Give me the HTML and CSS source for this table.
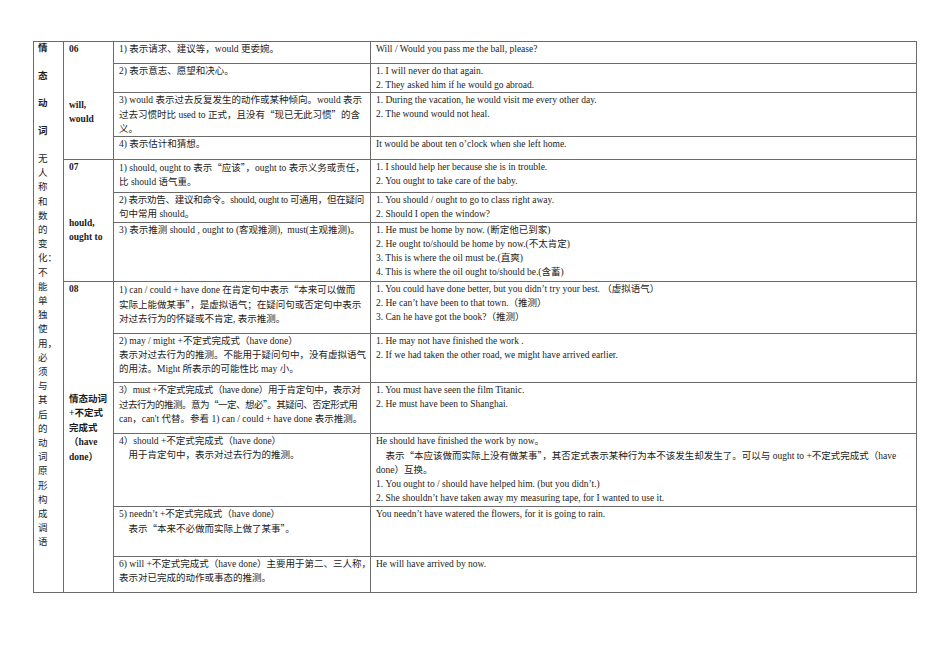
FILE: index.html
```html
<!DOCTYPE html>
<html lang="zh-CN">
<head>
<meta charset="utf-8">
<title>情态动词</title>
<link rel="stylesheet" href="styles.css">
</head>
<body>
<div class="sheet">
<table class="grammar">
<colgroup><col class="w1"><col class="w2"><col class="w3"><col class="w4"></colgroup>
<tbody>
<tr class="r1">
<td class="c1" rowspan="13">
<div class="c1-top"><b>情</b><br><br><b>态</b><br><br><b>动</b><br><br><b>词</b><br><br></div>
<div class="c1-body">无<br>人<br>称<br>和<br>数<br>的<br>变<br>化：<br>不<br>能<br>单<br>独<br>使<br>用，<br>必<br>须<br>与<br>其<br>后<br>的<br>动<br>词<br>原<br>形<br>构<br>成<br>调<br>语</div>
</td>
<td class="c2" rowspan="4"><div class="lbl">06</div><div class="sp-a"></div><div class="lbl">will,</div><div class="lbl">would</div></td>
<td class="c3">1) 表示请求、建议等，would 更委婉。</td>
<td class="c4">Will / Would you pass me the ball, please?</td>
</tr>
<tr class="r2">
<td class="c3">2) 表示意志、愿望和决心。</td>
<td class="c4">1. I will never do that again.<br>2. They asked him if he would go abroad.</td>
</tr>
<tr class="r3">
<td class="c3">3) would 表示过去反复发生的动作或某种倾向。would 表示<br>过去习惯时比 used to 正式，且没有<span class="q">“</span>现已无此习惯<span class="q">”</span>的含<br>义。</td>
<td class="c4">1. During the vacation, he would visit me every other day.<br>2. The wound would not heal.</td>
</tr>
<tr class="r4">
<td class="c3">4) 表示估计和猜想。</td>
<td class="c4">It would be about ten o’clock when she left home.</td>
</tr>
<tr class="r5">
<td class="c2" rowspan="3"><div class="lbl">07</div><div class="sp-a"></div><div class="lbl">hould,</div><div class="lbl">ought to</div></td>
<td class="c3">1) should, ought to 表示<span class="q">“</span>应该<span class="q">”</span>，ought to 表示义务或责任，<br>比 should 语气重。</td>
<td class="c4">1. I should help her because she is in trouble.<br>2. You ought to take care of the baby.</td>
</tr>
<tr class="r6">
<td class="c3"><span class="tight">2) 表示劝告、建议和命令。should, ought to 可通用，但在疑问</span><br>句中常用 should。</td>
<td class="c4">1. You should / ought to go to class right away.<br>2. Should I open the window?</td>
</tr>
<tr class="r7">
<td class="c3">3) 表示推测 should , ought to (客观推测),&nbsp; must(主观推测)。</td>
<td class="c4">1. He must be home by now. (断定他已到家)<br>2. He ought to/should be home by now.(不太肯定)<br>3. This is where the oil must be.(直爽)<br>4. This is where the oil ought to/should be.(含蓄)</td>
</tr>
<tr class="r8">
<td class="c2" rowspan="6"><div class="lbl">08</div><div class="sp-b"></div><div class="lbl2">情态动词<br>+不定式<br>完成式<br>（have<br>done）</div></td>
<td class="c3">1) can / could + have done 在肯定句中表示<span class="q">“</span>本来可以做而<br>实际上能做某事<span class="q">”</span>，是虚拟语气；在疑问句或否定句中表示<br>对过去行为的怀疑或不肯定, 表示推测。</td>
<td class="c4">1. You could have done better, but you didn’t try your best. （虚拟语气）<br>2. He can’t have been to that town.（推测）<br>3. Can he have got the book?（推测）</td>
</tr>
<tr class="r9">
<td class="c3">2) may / might +不定式完成式（have done）<br>表示对过去行为的推测。不能用于疑问句中，没有虚拟语气<br>的用法。Might 所表示的可能性比 may 小。</td>
<td class="c4">1. He may not have finished the work .<br>2. If we had taken the other road, we might have arrived earlier.</td>
</tr>
<tr class="r10">
<td class="c3"><span class="tight">3）must +不定式完成式（have done）用于肯定句中，表示对</span><br><span class="tighter">过去行为的推测。意为<span class="q">“</span>一定、想必<span class="q">”</span>。其疑问、否定形式用</span><br>can，can't 代替。参看 1) can / could + have done 表示推测。</td>
<td class="c4">1. You must have seen the film Titanic.<br>2. He must have been to Shanghai.</td>
</tr>
<tr class="r11">
<td class="c3">4）should +不定式完成式（have done）<br>　用于肯定句中，表示对过去行为的推测。</td>
<td class="c4">He should have finished the work by now。<br>　表示<span class="q">“</span>本应该做而实际上没有做某事<span class="q">”</span>，其否定式表示某种行为本不该发生却发生了。可以与 ought to +不定式完成式（have<br>done）互换。<br>1. You ought to / should have helped him. (but you didn’t.)<br>2. She shouldn’t have taken away my measuring tape, for I wanted to use it.</td>
</tr>
<tr class="r12">
<td class="c3">5) needn’t +不定式完成式（have done）<br>　表示<span class="q">“</span>本来不必做而实际上做了某事<span class="q">”</span>。</td>
<td class="c4">You needn’t have watered the flowers, for it is going to rain.</td>
</tr>
<tr class="r13">
<td class="c3">6) will +不定式完成式（have done）主要用于第二、三人称，<br>表示对已完成的动作或事态的推测。</td>
<td class="c4">He will have arrived by now.</td>
</tr>
</tbody>
</table>
</div>
</body>
</html>
```
FILE: styles.css
```css
html, body {
  margin: 0;
  padding: 0;
  background: #ffffff;
}
body {
  font-family: "Liberation Serif", "Noto Sans CJK SC", serif;
  font-size: 9.5px;
  color: #1c1c1c;
}
.sheet {
  padding: 41px 0 0 33px;
}
.grammar {
  border-collapse: collapse;
  table-layout: fixed;
  width: 883px;
}
.w1 { width: 30px; }
.w2 { width: 50px; }
.w3 { width: 257px; }
.w4 { width: 546px; }

.grammar td {
  border: 1px solid #6b6b6b;
  vertical-align: top;
  padding: 0 4px 0 5px;
  line-height: 14px;
  white-space: nowrap;
  overflow: hidden;
}
.grammar td.c3,
.grammar td.c4 {
  padding-top: 0;
  padding-bottom: 0;
}
.grammar td.c3 {
  padding-right: 2px;
}
.q {
  font-family: "Noto Sans CJK SC", sans-serif;
  font-feature-settings: "fwid" 1;
}
.tight {
  letter-spacing: -0.25px;
}
.tighter {
  letter-spacing: -0.5px;
}
.grammar td.c1 {
  padding: 0 0 0 4px;
}
.c1-top {
  line-height: 13.75px;
}
.c1-top b {
  font-weight: 700;
}
.c1-body {
  line-height: 14.2px;
  font-weight: 400;
}
.grammar td.c2 {
  padding: 1px 2px 0 5px;
  font-weight: 700;
}
.lbl {
  line-height: 13.9px;
}
.lbl2 {
  line-height: 14.4px;
}
.sp-a {
  height: 41.7px;
}
.sp-b {
  height: 95px;
}

.r1 { height: 22px; }
.r2 { height: 29px; }
.r3 { height: 43px; }
.r4 { height: 23px; }
.r5 { height: 33px; }
.r6 { height: 30px; }
.r7 { height: 59px; }
.r8 { height: 52px; }
.r9 { height: 49px; }
.r10 { height: 51px; }
.r11 { height: 73px; }
.r12 { height: 50px; }
.r13 { height: 36px; }
```
